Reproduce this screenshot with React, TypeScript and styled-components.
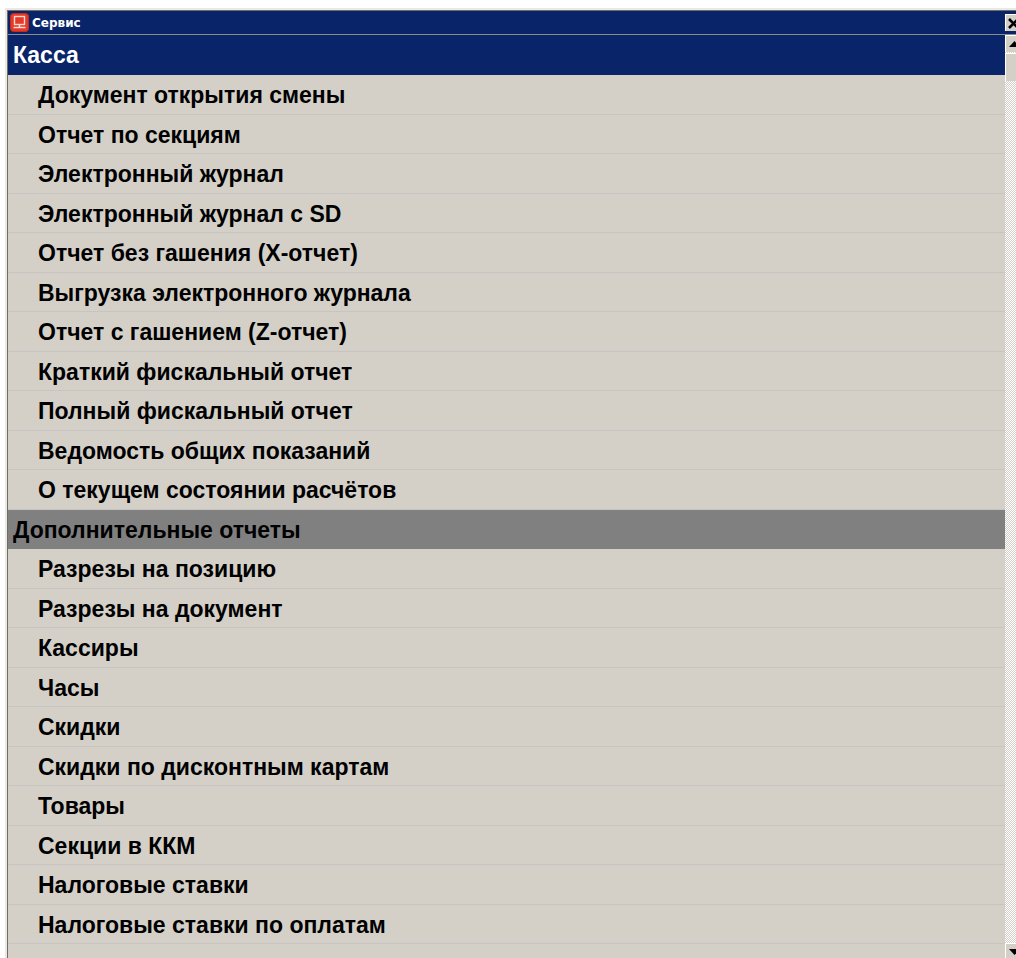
import styled, { createGlobalStyle } from 'styled-components';

const kassaItems = [
    'Документ открытия смены',
    'Отчет по секциям',
    'Электронный журнал',
    'Электронный журнал с SD',
    'Отчет без гашения (X-отчет)',
    'Выгрузка электронного журнала',
    'Отчет с гашением (Z-отчет)',
    'Краткий фискальный отчет',
    'Полный фискальный отчет',
    'Ведомость общих показаний',
    'О текущем состоянии расчётов',
];

const extraItems = [
    'Разрезы на позицию',
    'Разрезы на документ',
    'Кассиры',
    'Часы',
    'Скидки',
    'Скидки по дисконтным картам',
    'Товары',
    'Секции в ККМ',
    'Налоговые ставки',
    'Налоговые ставки по оплатам',
];

const GlobalStyle = createGlobalStyle`
    html, body {
        margin: 0;
        padding: 0;
        background: #ffffff;
        overflow: hidden;
    }
`;

const Screen = styled.div`
    width: 1016px;
    height: 958px;
    box-sizing: border-box;
    padding: 8px 0 0 5px;
    overflow: hidden;
    font-family: 'Liberation Sans', Arial, sans-serif;
`;

// the window is a little wider than the desktop, so its right edge is cut off
const Win = styled.div`
    width: 1018px;
    height: 952px;
    box-sizing: border-box;
    background: #d4d0c8;
    border-top: 2px solid #ece9e2;
    border-left: 2px solid #ece9e2;
    display: flex;
    flex-direction: column;
`;

const TitleBar = styled.div`
    flex: none;
    height: 24px;
    box-sizing: border-box;
    border-top: 1px solid #6d6d6d;
    border-left: 1px solid #6d6d6d;
    background: #0a246a;
    display: flex;
    align-items: center;
    gap: 3px;
    padding-left: 2px;
`;

const TitleText = styled.span`
    flex: 1;
    color: #ffffff;
    font-size: 12px;
    font-weight: 700;
    font-family: 'DejaVu Sans', sans-serif;
`;

const CloseButton = styled.div`
    flex: none;
    width: 18px;
    height: 17px;
    box-sizing: border-box;
    padding-left: 2px;
    background: #d4d0c8;
    border-top: 1px solid #ffffff;
    border-left: 1px solid #ffffff;
    display: flex;
    align-items: center;
`;

const Body = styled.div`
    flex: 1;
    min-height: 0;
    display: flex;
    border-top: 1px solid #8c8c8c;
    border-left: 1px solid #6d6d6d;
`;

const List = styled.div`
    flex: 1;
    min-width: 0;
`;

const Group = styled.div<{ $tone: 'active' | 'plain' }>`
    height: ${(p) => (p.$tone === 'active' ? '40px' : '39.5px')};
    box-sizing: border-box;
    display: flex;
    align-items: center;
    padding: ${(p) => (p.$tone === 'active' ? '1px' : '2px')} 0 0 5px;
    font-size: 23px;
    font-weight: 700;
    color: ${(p) => (p.$tone === 'active' ? '#ffffff' : '#000000')};
    background: ${(p) => (p.$tone === 'active' ? '#0a246a' : '#808080')};
`;

const Item = styled.div`
    height: 39.5px;
    box-sizing: border-box;
    display: flex;
    align-items: center;
    padding: 3px 0 0 30px;
    font-size: 23px;
    font-weight: 700;
    color: #000000;
    border-bottom: 1px solid #c6c5c4;
`;

const Scrollbar = styled.div`
    flex: none;
    width: 18px;
    display: flex;
    flex-direction: column;
    background-color: #ffffff;
    background-image: conic-gradient(#d4d0c8 25%, #ffffff 0 50%, #d4d0c8 0 75%, #ffffff 0);
    background-size: 2px 2px;
`;

const ScrollButton = styled.div`
    flex: none;
    height: 17px;
    box-sizing: border-box;
    background: #d4d0c8;
    border-top: 1px solid #ffffff;
    border-left: 1px solid #ffffff;
    display: flex;
    align-items: center;
    justify-content: center;
`;

const ScrollThumb = styled.div`
    flex: none;
    height: 28px;
    margin-top: 1px;
    box-sizing: border-box;
    background: #d4d0c8;
    border-top: 1px solid #ffffff;
    border-left: 1px solid #ffffff;
`;

const ScrollTrack = styled.div`
    flex: 1;
`;

const AppIcon = () => (
    <svg width="19" height="19" viewBox="0 0 19 19">
        <rect x="0.5" y="0.5" width="18" height="18" rx="3" fill="#e33a2a" stroke="#c22a1e" />
        <rect x="4.5" y="3.5" width="10" height="8" fill="#e33a2a" stroke="#ffd8d0" strokeWidth="1.4" />
        <path d="M9.5 11.5V14M3.5 14.5h12" stroke="#ffd8d0" strokeWidth="1.6" fill="none" />
    </svg>
);

const CloseIcon = () => (
    <svg width="11" height="11" viewBox="0 0 11 11">
        <path d="M1 1L10 10M10 1L1 10" stroke="#000000" strokeWidth="2.6" fill="none" />
    </svg>
);

const Arrow = ({ up }: { up?: boolean }) => (
    <svg width="11" height="6" viewBox="0 0 11 6">
        <path d={up ? 'M5.5 0L11 6H0Z' : 'M0 0H11L5.5 6Z'} fill="#000000" />
    </svg>
);

export default function App() {
    return (
        <>
            <GlobalStyle />
            <Screen>
                <Win>
                    <TitleBar>
                        <AppIcon />
                        <TitleText>Сервис</TitleText>
                        <CloseButton>
                            <CloseIcon />
                        </CloseButton>
                    </TitleBar>
                    <Body>
                        <List>
                            <Group $tone="active">Касса</Group>
                            {kassaItems.map((name) => (
                                <Item key={name}>{name}</Item>
                            ))}
                            <Group $tone="plain">Дополнительные отчеты</Group>
                            {extraItems.map((name) => (
                                <Item key={name}>{name}</Item>
                            ))}
                        </List>
                        <Scrollbar>
                            <ScrollButton>
                                <Arrow up />
                            </ScrollButton>
                            <ScrollThumb />
                            <ScrollTrack />
                            <ScrollButton>
                                <Arrow />
                            </ScrollButton>
                        </Scrollbar>
                    </Body>
                </Win>
            </Screen>
        </>
    );
}
